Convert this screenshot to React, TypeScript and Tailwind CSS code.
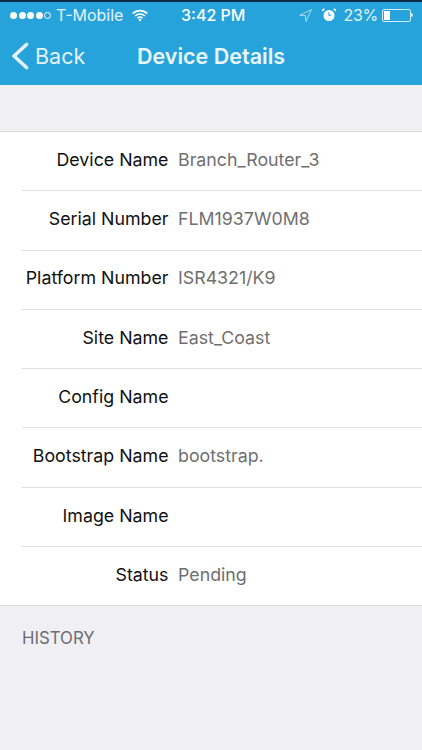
import React from "react";

const rows = [
  { label: "Device Name", value: "Branch_Router_3" },
  { label: "Serial Number", value: "FLM1937W0M8" },
  { label: "Platform Number", value: "ISR4321/K9" },
  { label: "Site Name", value: "East_Coast" },
  { label: "Config Name", value: "" },
  { label: "Bootstrap Name", value: "bootstrap." },
  { label: "Image Name", value: "" },
  { label: "Status", value: "Pending" },
];

const StatusBar = () => (
  <div className="flex h-[26px] items-center text-[16px] text-[#e4f3fb]">
    <div className="ml-[10px] flex w-[171px] items-center">
      <div className="flex items-center gap-[1.5px]">
        <span className="h-[7px] w-[7px] rounded-full bg-white" />
        <span className="h-[7px] w-[7px] rounded-full bg-white" />
        <span className="h-[7px] w-[7px] rounded-full bg-white" />
        <span className="h-[7px] w-[7px] rounded-full bg-white" />
        <span className="h-[7px] w-[7px] rounded-full border border-white" />
      </div>
      <span className="ml-[5px]">T-Mobile</span>
      <svg className="ml-[9px]" width="16" height="13" viewBox="0 0 17 13" fill="none" stroke="white" strokeWidth="1.7">
        <path d="M0.8 4.5a11 11 0 0 1 15.4 0" />
        <path d="M3.3 7a7.4 7.4 0 0 1 10.4 0" />
        <path d="M5.8 9.4a3.8 3.8 0 0 1 5.4 0" />
        <path d="M8.5 12.8l-1.6-1.9a2.2 2.2 0 0 1 3.2 0z" fill="white" stroke="none" />
      </svg>
    </div>
    <span className="whitespace-nowrap font-medium text-white">3:42 PM</span>
    <div className="ml-auto mr-[9px] flex items-center">
      <svg width="13" height="13" viewBox="0 0 13 13" fill="none" stroke="white" strokeWidth="0.8" strokeLinejoin="round" className="opacity-80">
        <path d="M12.4 0.6 0.8 6.2l5.6 0.4 0.6 5.8z" />
      </svg>
      <svg className="ml-[10px]" width="14" height="14" viewBox="0 0 14 14" fill="white">
        <path fillRule="evenodd" d="M7 2a5.5 5.5 0 1 1 0 11A5.5 5.5 0 0 1 7 2zM6.4 4.2v3.6h3V6.8H7.4V4.2z" />
        <path d="M0.6 3.4 3 1a1.5 1.5 0 0 0-2.4 2.4zM13.4 3.4 11 1a1.5 1.5 0 0 1 2.4 2.4z" />
      </svg>
      <span className="ml-[8px] tracking-[-0.3px]">23%</span>
      <div className="ml-[4px] flex items-center">
        <div className="flex h-[13px] w-[29px] rounded-[2px] border border-white/80 p-[1px]">
          <div className="w-[6px] bg-white" />
        </div>
        <div className="h-[4px] w-[2px] rounded-r-full bg-white/80" />
      </div>
    </div>
  </div>
);

export default function App() {
  return (
    <div className="flex h-[750px] w-[422px] flex-col overflow-hidden bg-[#efeff4] font-['Inter',sans-serif]">
      <header className="h-[85px] border-t-2 border-[#0d2a44] bg-[#27a3dc]">
        <StatusBar />
        <div className="relative flex h-[56px] items-center">
          <div className="ml-[11px] flex items-center text-[#e4f3fb]">
            <svg width="18" height="28" viewBox="0 0 18 28" fill="none" stroke="currentColor" strokeWidth="3.6" strokeLinecap="round" strokeLinejoin="round">
              <path d="M15.5 2.5 3 14l12.5 11.5" />
            </svg>
            <span className="ml-[6px] text-[21.5px]">Back</span>
          </div>
          <div className="absolute left-[137px] whitespace-nowrap text-[21.5px] font-semibold text-[#e9f6fc]">
            Device Details
          </div>
        </div>
      </header>

      <main className="mt-[46px] border-y border-[#dcdce0] bg-white">
        {rows.map((row, i) => (
          <div key={row.label} className="pl-[22px]">
            <div className={`flex items-center pb-[2px] ${i < rows.length - 1 ? "h-[59.3px] border-b border-[#dfdfdf]" : "h-[58.2px]"}`}>
              <div className="w-[146.5px] text-right text-[17.8px] text-[#111111]">{row.label}</div>
              <div className="ml-[9.5px] text-[17.8px] text-[#6f6f6f]">{row.value}</div>
            </div>
          </div>
        ))}
      </main>

      <div className="ml-[22px] mt-[20px] text-[16.8px] text-[#6d6d72]">HISTORY</div>
    </div>
  );
}
